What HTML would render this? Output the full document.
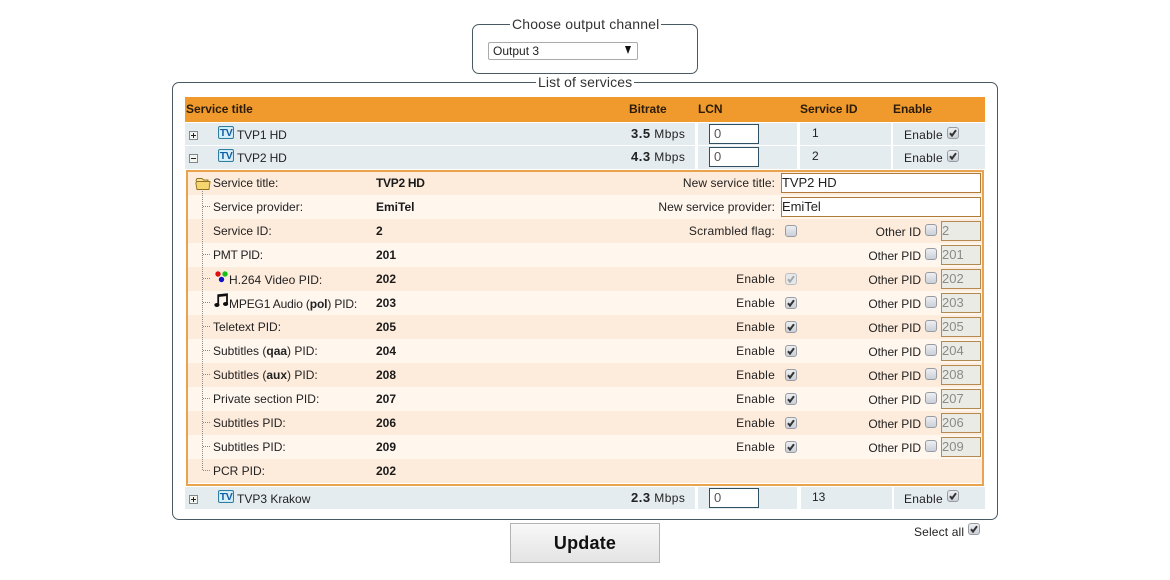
<!DOCTYPE html>
<html><head><meta charset="utf-8"><title>Services</title>
<style>
html,body{margin:0;padding:0;background:#fff}
body{position:relative;width:1170px;height:580px;overflow:hidden;font:12px/14px "Liberation Sans",Arial,sans-serif;color:#222;letter-spacing:0}
.a,.t,.b,.l,.v,.rl,.cb,.in,.row,.cell{position:absolute}
.t,.l,.v,.rl,.b{white-space:nowrap}
.fs{position:absolute;border:1px solid #4a5a62;border-radius:7px;box-sizing:border-box}
.leg{position:absolute;background:#fff;font-size:14px;line-height:16px;padding:0 2px;letter-spacing:.16px;white-space:nowrap;color:#333}
.hd{position:absolute;left:185px;top:97px;width:800px;height:25px;background:#f09a2e}
.hd b{position:absolute;top:5px;font-size:12px;line-height:14px;color:#2a1c08;letter-spacing:-.05px}
.cell{background:#e5ecf0;height:22px}
.lcn{position:absolute;left:709px;width:50px;height:20px;box-sizing:border-box;border:1px solid #2f4f63;background:#fff;padding-left:4px;font-size:13px;line-height:18px;color:#555}
.row{left:188px;width:794px;height:24px}
.d{background:#fdebdc}.e{background:#fff6ee}
.l{left:25px;top:5px}
.v{left:188px;top:5px;font-weight:bold;color:#1a1a1a}
.rl{right:207px;top:5px}
.s{letter-spacing:.25px}
.oth{right:61px;top:6px;letter-spacing:-.08px}
.cb{width:12px;height:12px}
.en{left:597px;top:6px}
.oc{left:737px;top:5px}
.in{left:753px;top:2px;width:40px;height:20px;box-sizing:border-box;border:1px solid #b48a52;background:#ebebe6;color:#8a8a8a;font-size:13px;line-height:18px;letter-spacing:0}
.wide{left:593px;width:200px;background:#fff;color:#222;border:1px solid #b07a38;padding-left:0;letter-spacing:-.05px}
.m{letter-spacing:.4px}
.m b{font-size:13px;letter-spacing:.5px}
</style></head><body>
<svg width="0" height="0" style="position:absolute">
<defs>
<linearGradient id="g" x1="0" y1="0" x2="0" y2="1"><stop offset="0" stop-color="#eef0f3"/><stop offset="1" stop-color="#c9ced6"/></linearGradient>
<symbol id="u" viewBox="0 0 12 12"><rect x=".5" y=".5" width="11" height="11" rx="2.5" fill="url(#g)" stroke="#989ca2"/></symbol>
<symbol id="c" viewBox="0 0 12 12"><rect x=".5" y=".5" width="11" height="11" rx="2.5" fill="url(#g)" stroke="#989ca2"/><path d="M3 6.2L5 8.6L9 3.2" fill="none" stroke="#333" stroke-width="2"/></symbol>
<symbol id="x" viewBox="0 0 12 12"><rect x=".5" y=".5" width="11" height="11" rx="2.5" fill="#e6e8ea" stroke="#bcbec2"/><path d="M3 6.2L5 8.6L9 3.2" fill="none" stroke="#a5a8aa" stroke-width="2"/></symbol>
<symbol id="tv" viewBox="0 0 16 13"><rect x=".5" y=".5" width="15" height="12" rx="1.5" fill="#bfe3f2" stroke="#2e7f9f"/><rect x="1.5" y="1.5" width="13" height="10" fill="#d8eff8"/><text x="8" y="10.2" text-anchor="middle" font-family="Liberation Sans" font-weight="bold" font-size="10.5" fill="#0f5fa8" letter-spacing="-.5">TV</text></symbol>
<symbol id="pl" viewBox="0 0 9 9"><rect x=".5" y=".5" width="8" height="8" fill="#f4f4f0" stroke="#7c8a90"/><path d="M2 4.5H7M4.5 2V7" stroke="#222" fill="none"/></symbol>
<symbol id="mi" viewBox="0 0 9 9"><rect x=".5" y=".5" width="8" height="8" fill="#f4f4f0" stroke="#7c8a90"/><path d="M2 4.5H7" stroke="#222" fill="none"/></symbol>
</defs></svg>

<div class="fs" style="left:472px;top:24px;width:226px;height:50px"></div>
<div class="leg" style="left:510px;top:16px">Choose output channel</div>
<div class="a" style="left:488px;top:42px;width:150px;height:18px;box-sizing:border-box;border:1px solid #aaa;border-radius:2px;background:#fff;padding-left:4px;line-height:16px">Output 3</div>
<div class="a" style="left:625px;top:46px;width:0;height:0;border-left:3.5px solid transparent;border-right:3.5px solid transparent;border-top:8px solid #111"></div>

<div class="fs" style="left:172px;top:82px;width:826px;height:438px"></div>
<div class="leg" style="left:536px;top:74px;letter-spacing:.1px">List of services</div>

<div class="hd"><b style="left:1px">Service title</b><b style="left:444px">Bitrate</b><b style="left:513px">LCN</b><b style="left:615px">Service ID</b><b style="left:708px">Enable</b></div>

<!-- row 1 -->
<div class="cell" style="left:185px;top:123px;width:510px"></div><div class="cell" style="left:698px;top:123px;width:99px"></div><div class="cell" style="left:800px;top:123px;width:91px"></div><div class="cell" style="left:893px;top:123px;width:92px"></div>
<svg class="a" style="left:189px;top:131px" width="9" height="9"><use href="#pl"/></svg>
<svg class="a" style="left:218px;top:126px" width="16" height="13"><use href="#tv"/></svg>
<div class="t" style="left:237px;top:128px;letter-spacing:-.15px">TVP1 HD</div>
<div class="t m" style="left:631px;top:127px"><b>3.5</b> Mbps</div>
<div class="lcn" style="top:124px">0</div>
<div class="t" style="left:812px;top:126px">1</div>
<div class="t s" style="left:904px;top:128px">Enable</div>
<svg class="cb" style="left:947px;top:127px"><use href="#c"/></svg>

<!-- row 2 -->
<div class="cell" style="left:185px;top:146px;width:510px;height:23px"></div><div class="cell" style="left:698px;top:146px;width:99px;height:23px"></div><div class="cell" style="left:800px;top:146px;width:91px;height:23px"></div><div class="cell" style="left:893px;top:146px;width:92px;height:23px"></div>
<svg class="a" style="left:189px;top:154px" width="9" height="9"><use href="#mi"/></svg>
<svg class="a" style="left:218px;top:149px" width="16" height="13"><use href="#tv"/></svg>
<div class="t" style="left:237px;top:151px;letter-spacing:-.15px">TVP2 HD</div>
<div class="t m" style="left:631px;top:150px"><b>4.3</b> Mbps</div>
<div class="lcn" style="top:147px">0</div>
<div class="t" style="left:812px;top:149px">2</div>
<div class="t s" style="left:904px;top:151px">Enable</div>
<svg class="cb" style="left:947px;top:150px"><use href="#c"/></svg>

<!-- details -->
<div class="row d" style="top:171px"><div class="l">Service title:</div><div class="v" style="letter-spacing:-.3px">TVP2 HD</div><div class="rl" style="letter-spacing:.08px">New service title:</div><div class="in wide">TVP2 HD</div></div>
<div class="row e" style="top:195px"><div class="l">Service provider:</div><div class="v">EmiTel</div><div class="rl" style="letter-spacing:.06px">New service provider:</div><div class="in wide">EmiTel</div></div>
<div class="row d" style="top:219px"><div class="l">Service ID:</div><div class="v">2</div><div class="rl" style="letter-spacing:.18px">Scrambled flag:</div><svg class="cb en"><use href="#u"/></svg><div class="rl oth" style="letter-spacing:0">Other ID</div><svg class="cb oc"><use href="#u"/></svg><div class="in">2</div></div>
<div class="row e" style="top:243px"><div class="l" style="letter-spacing:-.25px">PMT PID:</div><div class="v">201</div><div class="rl oth">Other PID</div><svg class="cb oc"><use href="#u"/></svg><div class="in">201</div></div>
<div class="row d" style="top:267px"><div class="l" style="left:41px;top:6px;letter-spacing:.05px">H.264 Video PID:</div><div class="v">202</div><div class="rl s">Enable</div><svg class="cb en"><use href="#x"/></svg><div class="rl oth">Other PID</div><svg class="cb oc"><use href="#u"/></svg><div class="in">202</div></div>
<div class="row e" style="top:291px"><div class="l" style="left:41px;top:6px;letter-spacing:-.15px">MPEG1 Audio (<b>pol</b>) PID:</div><div class="v">203</div><div class="rl s">Enable</div><svg class="cb en"><use href="#c"/></svg><div class="rl oth">Other PID</div><svg class="cb oc"><use href="#u"/></svg><div class="in">203</div></div>
<div class="row d" style="top:315px"><div class="l">Teletext PID:</div><div class="v">205</div><div class="rl s">Enable</div><svg class="cb en"><use href="#c"/></svg><div class="rl oth">Other PID</div><svg class="cb oc"><use href="#u"/></svg><div class="in">205</div></div>
<div class="row e" style="top:339px"><div class="l">Subtitles (<b>qaa</b>) PID:</div><div class="v">204</div><div class="rl s">Enable</div><svg class="cb en"><use href="#c"/></svg><div class="rl oth">Other PID</div><svg class="cb oc"><use href="#u"/></svg><div class="in">204</div></div>
<div class="row d" style="top:363px"><div class="l">Subtitles (<b>aux</b>) PID:</div><div class="v">208</div><div class="rl s">Enable</div><svg class="cb en"><use href="#c"/></svg><div class="rl oth">Other PID</div><svg class="cb oc"><use href="#u"/></svg><div class="in">208</div></div>
<div class="row e" style="top:387px"><div class="l" style="letter-spacing:.05px">Private section PID:</div><div class="v">207</div><div class="rl s">Enable</div><svg class="cb en"><use href="#c"/></svg><div class="rl oth">Other PID</div><svg class="cb oc"><use href="#u"/></svg><div class="in">207</div></div>
<div class="row d" style="top:411px"><div class="l">Subtitles PID:</div><div class="v">206</div><div class="rl s">Enable</div><svg class="cb en"><use href="#c"/></svg><div class="rl oth">Other PID</div><svg class="cb oc"><use href="#u"/></svg><div class="in">206</div></div>
<div class="row e" style="top:435px"><div class="l">Subtitles PID:</div><div class="v">209</div><div class="rl s">Enable</div><svg class="cb en"><use href="#c"/></svg><div class="rl oth">Other PID</div><svg class="cb oc"><use href="#u"/></svg><div class="in">209</div></div>
<div class="row d" style="top:459px"><div class="l">PCR PID:</div><div class="v">202</div></div>

<div class="a" style="left:186px;top:170px;width:798px;height:316px;box-sizing:border-box;border:2px solid #e8a34f"></div>

<!-- tree lines -->
<svg class="a" style="left:195px;top:175px" width="20" height="300">
<path d="M7.5 16V295.5H16M8 31.5H16M8 79.5H16M8 103.5H16M8 127.5H16M8 151.5H16M8 175.5H16M8 199.5H16M8 223.5H16M8 247.5H16M8 271.5H16" fill="none" stroke="#8b8b8b" stroke-dasharray="1 1"/>
<path d="M1 5.5L2 3.5H7L8.5 5H13V7H2Z" fill="#fbe39a" stroke="#8f7020" stroke-width=".9"/>
<path d="M.8 8L2 6.5H15L14 14.5H2Z" fill="#f7d56e" stroke="#8f7020" stroke-width=".9"/>
</svg>
<svg class="a" style="left:214px;top:271px" width="15" height="14">
<circle cx="4" cy="3" r="2.7" fill="#e01010"/><circle cx="11" cy="3" r="2.7" fill="#16c016"/><circle cx="7.5" cy="8.5" r="2.7" fill="#1010c8"/>
</svg>
<svg class="a" style="left:214px;top:293px" width="15" height="15">
<path d="M4.2 12V2.2L13 1.2V10.5" fill="none" stroke="#111" stroke-width="1.8"/>
<path d="M4 1.5L13.5 .5V3L4 4Z" fill="#111"/>
<ellipse cx="2.9" cy="12" rx="2.6" ry="2" fill="#111"/><ellipse cx="11.6" cy="11" rx="2.6" ry="2" fill="#111"/>
</svg>

<!-- row 3 -->
<div class="cell" style="left:185px;top:487px;width:510px"></div><div class="cell" style="left:698px;top:487px;width:99px"></div><div class="cell" style="left:801px;top:487px;width:91px"></div><div class="cell" style="left:894px;top:487px;width:91px"></div>
<svg class="a" style="left:189px;top:495px" width="9" height="9"><use href="#pl"/></svg>
<svg class="a" style="left:218px;top:490px" width="16" height="13"><use href="#tv"/></svg>
<div class="t" style="left:237px;top:492px">TVP3 Krakow</div>
<div class="t m" style="left:631px;top:491px"><b>2.3</b> Mbps</div>
<div class="lcn" style="top:488px">0</div>
<div class="t" style="left:812px;top:490px">13</div>
<div class="t s" style="left:904px;top:492px">Enable</div>
<svg class="cb" style="left:947px;top:490px"><use href="#c"/></svg>

<!-- bottom -->
<div class="a" style="left:510px;top:523px;width:150px;height:40px;box-sizing:border-box;border:1px solid #b4b4b4;background:linear-gradient(#f8f8f8,#e4e4e4);text-align:center;font-weight:bold;font-size:18px;line-height:38px;color:#111;letter-spacing:.2px">Update</div>
<div class="t" style="left:914px;top:525px;letter-spacing:.15px">Select all</div>
<svg class="cb" style="left:968px;top:523px"><use href="#c"/></svg>
</body></html>
